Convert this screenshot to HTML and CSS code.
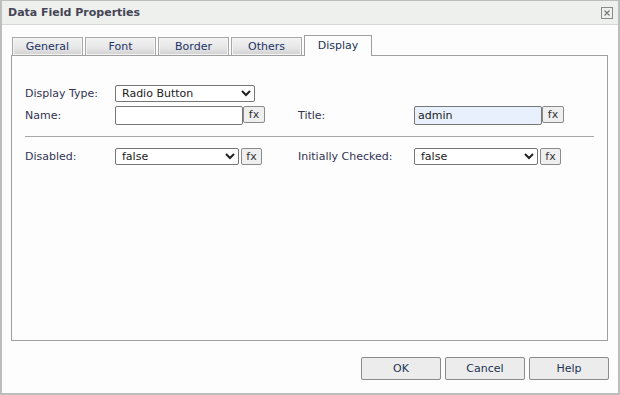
FILE: index.html
```html
<!DOCTYPE html>
<html>
<head>
<meta charset="utf-8">
<link rel="stylesheet" href="styles.css">
</head>
<body>
<div class="dialog">
  <div class="titlebar">
    <span class="title">Data Field Properties</span>
    <span class="close"><svg width="12" height="12" viewBox="0 0 12 12"><rect x="0.5" y="0.5" width="11" height="11" fill="none" stroke="#8a8a8a"/><path d="M3.5 3.5 L8.5 8.5 M8.5 3.5 L3.5 8.5" stroke="#7a7a7a" stroke-width="1.2"/></svg></span>
  </div>
  <div class="body">
    <div class="tabs">
      <div class="tab">General</div>
      <div class="tab">Font</div>
      <div class="tab">Border</div>
      <div class="tab">Others</div>
      <div class="tab active">Display</div>
    </div>
    <div class="panel">
      <div class="row">
        <label class="lbl">Display Type:</label>
        <select class="sel sel-type"><option>Radio Button</option></select>
      </div>
      <div class="row row2">
        <label class="lbl">Name:</label>
        <div class="field"><input class="inp" type="text" value=""><button class="fx">fx</button></div>
        <label class="lbl lbl-right">Title:</label>
        <div class="field"><input class="inp inp-filled" type="text" value="admin"><button class="fx">fx</button></div>
      </div>
      <div class="sep"></div>
      <div class="row row3">
        <label class="lbl">Disabled:</label>
        <div class="field"><select class="sel sel-bool"><option>false</option></select><button class="fx">fx</button></div>
        <label class="lbl lbl-right">Initially Checked:</label>
        <div class="field"><select class="sel sel-bool"><option>false</option></select><button class="fx">fx</button></div>
      </div>
    </div>
    <div class="buttons">
      <button class="btn">OK</button>
      <button class="btn">Cancel</button>
      <button class="btn">Help</button>
    </div>
  </div>
</div>
</body>
</html>
```

FILE: styles.css
```css
html, body {
  margin: 0;
  padding: 0;
  background: #ffffff;
}
body {
  font-family: "DejaVu Sans", Verdana, sans-serif;
  font-size: 11px;
  color: #333344;
}
.dialog {
  width: 620px;
  height: 395px;
  box-sizing: border-box;
  border: 1px solid #bdbdbd;
  border-width: 1px 2px 2px 2px;
  background: #fcfdfc;
  display: flex;
  flex-direction: column;
}
.titlebar {
  height: 23px;
  background: #eef0ee;
  border-bottom: 1px solid #d6d8d6;
  display: flex;
  align-items: center;
  justify-content: space-between;
  padding: 0 5px 0 6px;
}
.title {
  font-weight: bold;
  font-size: 11px;
  color: #454555;
}
.close {
  display: flex;
  margin-top: 1px;
}
.body {
  padding: 10px 10px 0 9px;
  display: flex;
  flex-direction: column;
}
.tabs {
  display: flex;
  align-items: flex-end;
  padding-left: 1px;
  gap: 2px;
  height: 20px;
  position: relative;
  z-index: 1;
}
.tab {
  width: 71px;
  height: 18px;
  box-sizing: border-box;
  border: 1px solid #a8a8a8;
  border-bottom: none;
  box-shadow: inset 0 0 0 1px #f4f4f4;
  background: linear-gradient(#f2f2f2, #e6e6e6 60%, #d0d0d0);
  text-align: center;
  line-height: 17px;
  color: #223366;
}
.tab.active {
  width: 68px;
  height: 21px;
  background: #fcfdfc;
  border-color: #a0a0a0;
  box-shadow: none;
  line-height: 19px;
  color: #223355;
  margin-bottom: -1px;
}
.panel {
  height: 286px;
  box-sizing: border-box;
  border: 1px solid #a0a0a0;
  padding: 29px 13px 0 13px;
  display: flex;
  flex-direction: column;
}
.row {
  display: flex;
  align-items: center;
  height: 17px;
}
.row2 {
  margin-top: 4px;
  height: 19px;
}
.row3 {
  margin-top: 11px;
  height: 17px;
}
.lbl {
  width: 90px;
  flex: none;
  color: #333355;
}
.lbl-right {
  width: 116px;
  margin-left: 33px;
}
.row3 .lbl-right {
  margin-left: 36px;
}
.sep {
  height: 1px;
  background: #a8a8a8;
  margin-top: 11px;
  width: 569px;
}
.field {
  display: flex;
  align-items: flex-start;
  height: 19px;
}
.sel {
  font-family: "DejaVu Sans", Verdana, sans-serif;
  font-size: 11px;
  color: #222;
  height: 17px;
  box-sizing: border-box;
  border: 1px solid #767676;
  border-radius: 2px;
  background: #ffffff;
  padding: 0 0 0 2px;
  margin: 0;
}
.sel-type { width: 140px; }
.sel-bool { width: 124px; }
.row3 .field { height: 17px; }
.inp {
  width: 128px;
  height: 19px;
  box-sizing: border-box;
  border: 1px solid #767676;
  border-radius: 2px;
  padding: 0 3px;
  margin: 0;
  font-family: "DejaVu Sans", Verdana, sans-serif;
  font-size: 11px;
  color: #222;
  background: #ffffff;
}
.inp-filled {
  background: #e8f0fe;
}
.fx {
  width: 22px;
  height: 17px;
  box-sizing: border-box;
  border: 1px solid #8a8a8a;
  border-radius: 2px;
  background: #efefef;
  font-family: "DejaVu Sans", Verdana, sans-serif;
  font-size: 11px;
  color: #333;
  padding: 0;
  margin: 0;
  line-height: 14px;
}
.row3 .fx {
  margin-left: 2px;
  width: 21px;
}
.buttons {
  display: flex;
  justify-content: flex-end;
  gap: 4px;
  margin-top: 16px;
  margin-right: -1px;
}
.btn {
  width: 80px;
  height: 23px;
  box-sizing: border-box;
  border: 1px solid #8a8a8a;
  border-radius: 2px;
  background: #ececec;
  font-family: "DejaVu Sans", Verdana, sans-serif;
  font-size: 11px;
  color: #223355;
  padding: 0;
  margin: 0;
}
```
